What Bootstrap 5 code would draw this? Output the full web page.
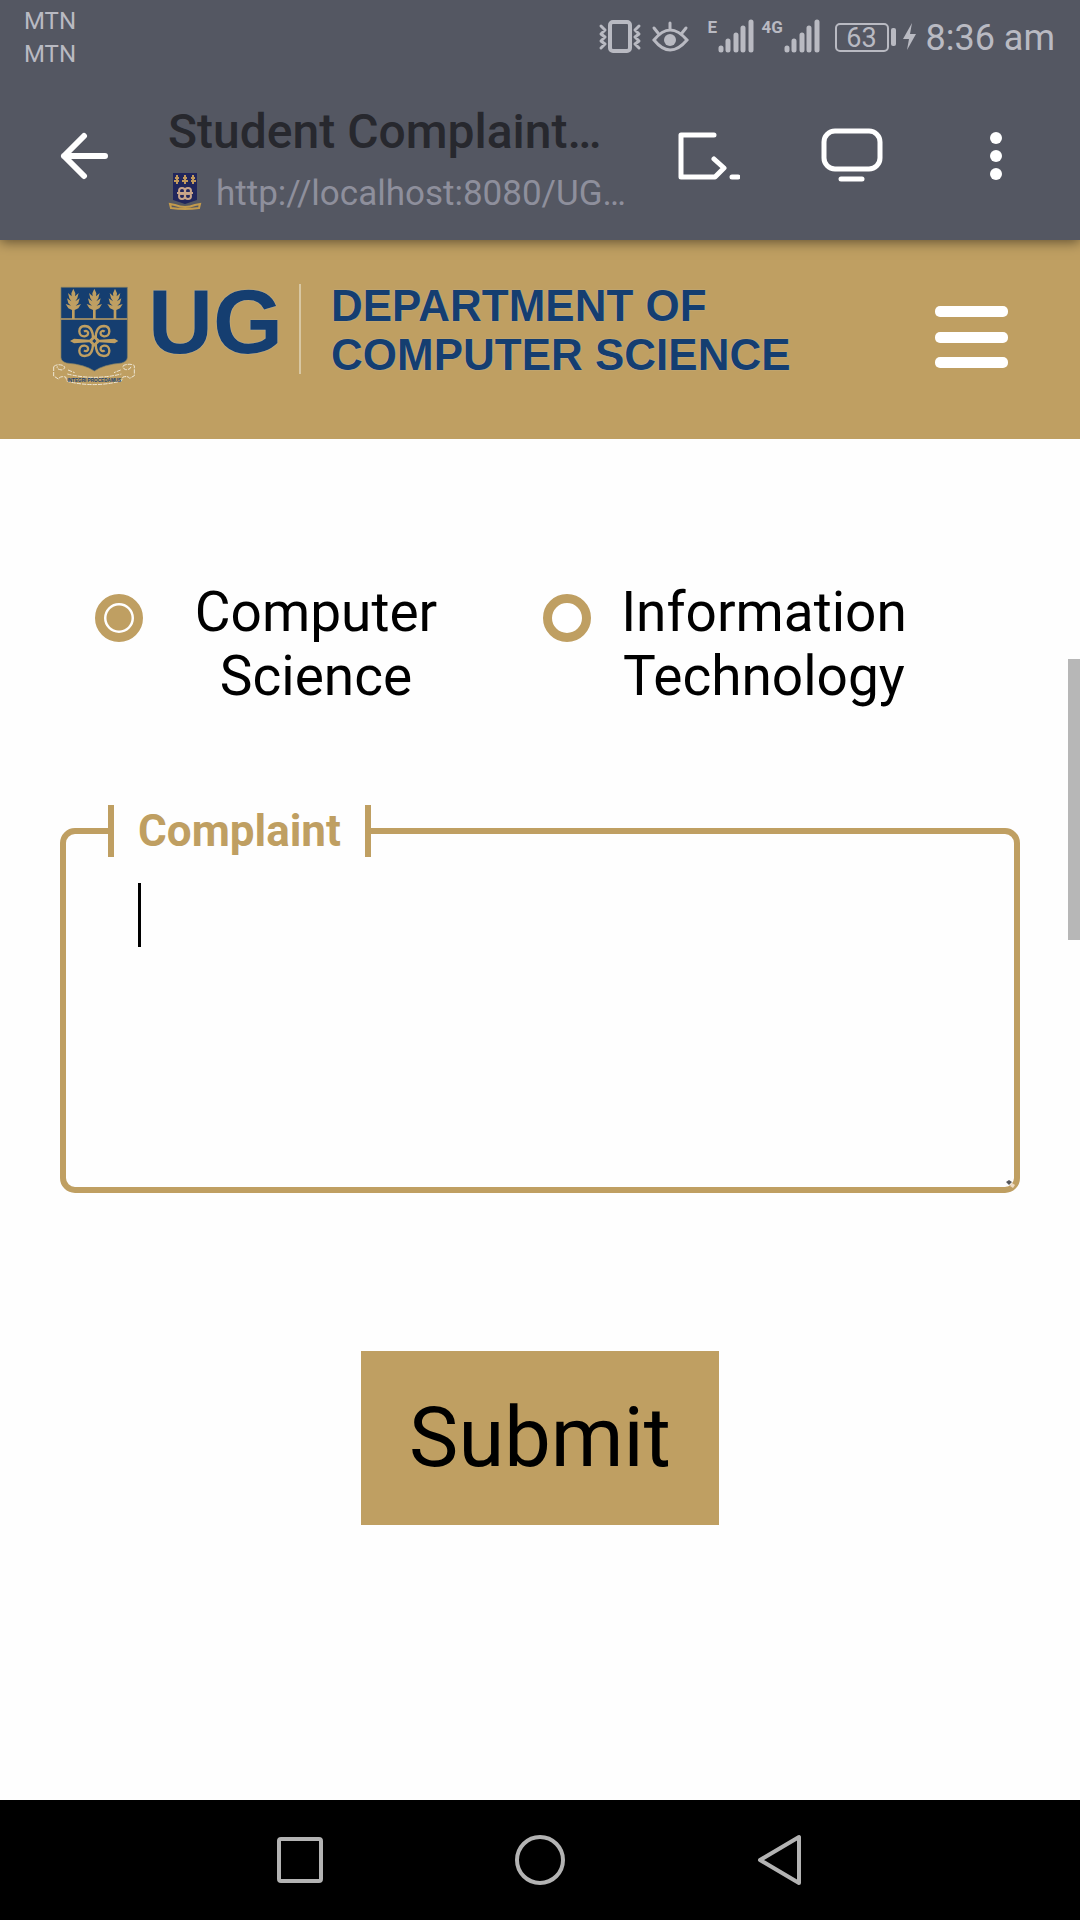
<!DOCTYPE html>
<html lang="en">
<head>
<meta charset="utf-8">
<meta name="viewport" content="width=device-width, initial-scale=1">
<title>Student Complaint</title>
<link href="https://cdn.jsdelivr.net/npm/bootstrap@5.3.0/dist/css/bootstrap.min.css" rel="stylesheet">
<style>
  :root { --gold: #bf9f62; --navy: #153e70; --slate: #545762; --soft: #b9bac2; }
  body { font-family: Roboto, "Noto Sans", sans-serif; color: #000; background: #fefefe; }
  svg { display: block; flex: none; }
  .plain-btn { background: none; border: 0; padding: 0; flex: none; }

  .status-bar { background: var(--slate); color: var(--soft); height: 72px; padding: 5px 25px 0 24px; z-index: 3; }
  .carrier { font-size: 24px; line-height: 33px; }
  .status-icons { padding-top: 11px; }
  .net-type { font: bold 17px/17px Roboto, sans-serif; padding-top: 3px; width: 10px; margin-left: 18px; }
  .net-wide { width: 22px; margin-left: 8px; }
  .battery-level { width: 54px; height: 29px; border: 2px solid var(--soft); border-radius: 5px; font-size: 27px; line-height: 26px; margin: 7px 0 0 15px; }
  .clock { font-size: 36px; line-height: 44px; }

  .app-bar { background: var(--slate); height: 168px; padding: 0 52px 0 60px; box-shadow: 0 2px 12px rgba(0,0,0,.5); z-index: 2; }
  .page-info { width: 462px; margin-left: 58px; padding-top: 32px; }
  .page-name { font-size: 48px; line-height: 56px; font-weight: 500; color: #27282e; }
  .page-url { font-size: 35px; line-height: 44px; color: #8e8f9c; margin-top: 12px; gap: 14px; }
  .tools { margin-left: 46px; }

  .site-header { background: var(--gold); min-height: 199px; padding: 41px 72px 0 50px; }
  .brand { color: var(--navy); font-family: "Liberation Sans", Arial, sans-serif; font-weight: bold; text-decoration: none; }
  .brand svg { margin-top: 4px; }
  .brand-ug { font-size: 90px; line-height: 80px; margin: 1px 0 0 10px; text-shadow: 0 0 1px #cbd0cf; }
  .brand-rule { width: 2px; height: 90px; margin: 3px 30px 0 16px; background: #d8c7a2; }
  .brand-dept { font-size: 44px; line-height: 49px; text-shadow: 0 0 1px #cbd0cf; }
  .menu-btn { margin-top: 24px; }

  .form-area { padding: 141px 60px 100px; }
  .options { padding: 0 32px; }
  .option { padding: 0 51px 0 3px; font-size: 55px; line-height: 64px; }
  .radio-gold { appearance: none; flex: none; width: 48px; height: 48px; margin: 14px 0 0; border: 9px solid var(--gold); border-radius: 50%; background: #fff; }
  .radio-gold:checked { background: radial-gradient(circle, var(--gold) 12px, #fff 13px); }

  .complaint-box { margin-top: 97px; border: 6px solid var(--gold); border-radius: 15px; padding: 0 0 0 42px; }
  .complaint-box legend { float: none; width: auto; margin: 0; padding: 0 24px; border: 0 solid var(--gold); border-width: 0 6px; color: var(--gold); font-size: 44px; font-weight: bold; line-height: 52px; }
  .complaint-text { display: block; width: 100%; height: 330px; padding: 26px 30px; border: 0; outline: 0; resize: none; background: none; font-size: 55px; line-height: 64px; }
  .text-caret { top: 26px; left: 30px; width: 3px; height: 64px; background: #000; }
  .resize-grip { right: -2px; bottom: -2px; width: 12px; height: 10px; }

  .submit-btn { margin-top: 158px; height: 174px; padding: 0 48px; border: 0; background: var(--gold); color: #000; font-size: 83px; line-height: 98px; }
  .scroll-thumb { right: 0; top: 659px; width: 12px; height: 281px; background: #b7b7b7; z-index: 3; }

  .nav-keys { background: #000; height: 120px; gap: 190px; }
</style>
</head>
<body class="d-flex flex-column min-vh-100 position-relative">

<div class="status-bar d-flex justify-content-between position-relative">
  <div class="carrier">MTN<br>MTN</div>
  <div class="status-icons d-flex">
    <svg width="44" height="38" viewBox="0 0 44 38" fill="none" stroke="#b9bac2" stroke-width="3" stroke-linecap="round" stroke-linejoin="round">
      <rect x="12" y="6" width="20" height="29" rx="3" stroke-width="4"/>
      <path d="M3 10l4 4-4 4 4 3-4 4 4 3-4 4M41 10l-4 4 4 4-4 3 4 4-4 3 4 4"/>
    </svg>
    <svg class="ms-2" width="40" height="38" viewBox="0 0 40 38" fill="none" stroke="#b9bac2" stroke-width="3" stroke-linecap="round">
      <path d="M4 24Q20 4 37 24Q20 44 4 24zM20 7v6M4 12l4 5M36 12l-4 5"/>
      <circle cx="20" cy="24" r="6" fill="#b9bac2" stroke="none"/>
    </svg>
    <span class="net-type">E</span>
    <svg width="36" height="38" viewBox="0 0 36 38" stroke="#b9bac2" stroke-width="5" stroke-linecap="round">
      <path d="M3 32v2M10 25v9M18 19v15M25 12v22M33 6v28"/>
    </svg>
    <span class="net-type net-wide">4G</span>
    <svg width="36" height="38" viewBox="0 0 36 38" stroke="#b9bac2" stroke-width="5" stroke-linecap="round">
      <path d="M3 32v2M10 25v9M18 19v15M25 12v22M33 6v28"/>
    </svg>
    <div class="battery-level text-center">63</div>
    <svg width="37" height="38" viewBox="0 0 37 38" fill="#b9bac2">
      <rect x="2" y="12" width="5" height="18" rx="2"/>
      <path d="M23 7L14 23h6l-2 11 9-16h-6z"/>
    </svg>
    <span class="clock">8:36 am</span>
  </div>
</div>

<header class="app-bar d-flex position-relative">
  <button class="plain-btn" type="button" aria-label="Back">
    <svg width="50" height="56" viewBox="0 0 50 56" fill="none" stroke="#fff" stroke-width="6" stroke-linecap="round" stroke-linejoin="round">
      <path d="M24 8L4 28 24 48M4 28h41"/>
    </svg>
  </button>
  <div class="page-info">
    <div class="page-name text-truncate">Student Complaint…</div>
    <div class="page-url d-flex">
      <svg width="34" height="38" viewBox="0 0 34 38">
        <path d="M5 1h24v27l-12 4-12-4z" fill="#21265c"/>
        <path d="M9 3v9M17 3v9M25 3v9M7 6h4M15 6h4M23 6h4M6 9h5M14 9h6M23 9h5" stroke="#c39a5c" stroke-width="2"/>
        <g fill="none" stroke="#c9a58a" stroke-width="2"><circle cx="14" cy="19" r="3"/><circle cx="20" cy="19" r="3"/><circle cx="14" cy="24" r="3"/><circle cx="20" cy="24" r="3"/><path d="M9 21h16"/></g>
        <path d="M2 32l5 1q10 4 20 0l5-1-1 4q-14 2-28 0z" fill="none" stroke="#c39a4c" stroke-width="2"/>
      </svg>
      <span>http://localhost:8080/UG…</span>
    </div>
  </div>
  <div class="tools d-flex flex-fill justify-content-between align-items-center">
    <button class="plain-btn" type="button" aria-label="Console">
      <svg width="64" height="56" viewBox="0 0 64 56" fill="none" stroke="#fff" stroke-width="5" stroke-linecap="round" stroke-linejoin="round">
        <path d="M38 7H5v42h34l9-9-10-9M56 49h6"/>
      </svg>
    </button>
    <button class="plain-btn" type="button" aria-label="Desktop view">
      <svg width="62" height="56" viewBox="0 0 62 56" fill="none" stroke="#fff" stroke-width="5" stroke-linecap="round">
        <rect x="3" y="3" width="56" height="38" rx="11"/><path d="M20 51h21"/>
      </svg>
    </button>
    <button class="plain-btn" type="button" aria-label="More options">
      <svg width="64" height="56" viewBox="0 0 64 56" fill="#fff"><circle cx="32" cy="10" r="6"/><circle cx="32" cy="28" r="6"/><circle cx="32" cy="46" r="6"/></svg>
    </button>
  </div>
</header>

<nav class="site-header d-flex justify-content-between align-items-start">
  <a class="brand d-flex align-items-start" href="#">
    <svg width="88" height="102" viewBox="30 45 264 306">
      <path d="M63 52H262V262Q262 274 245 279Q190 284 163 303Q136 284 80 279Q63 274 63 262Z" fill="#153e70" stroke="#7a7c68" stroke-width="2"/>
      <path d="M63 147H262" stroke="#bf9f62" stroke-width="4"/>
      <g fill="#bf9f62">
        <path id="frond" d="M100 56l6 14-1 9 11-10-4 16-6 9 13-9-4 15-8 7 16-5-8 13-11 5v27h-8v-27l-11-5-8-13 16 5-8-7-4-15 13 9-6-9-4-16 11 10-1-9z"/>
        <use href="#frond" x="63"/><use href="#frond" x="125"/>
        <path d="M90 213l12-7 46 3 15-13 15 13 46-3 11 7-11 7-46-3-15 13-15-13-46 3z"/>
      </g>
      <path d="M163 206l6 7-6 7-6-7z" fill="#153e70"/>
      <g fill="none" stroke="#bf9f62" stroke-width="7">
        <path id="curl" d="M159 206Q159 168 134 168Q118 169 118 184Q119 200 134 199Q146 197 144 187Q139 179 132 185"/>
        <use href="#curl" transform="translate(326 0) scale(-1 1)"/>
        <use href="#curl" transform="translate(0 426) scale(1 -1)"/>
        <use href="#curl" transform="translate(326 426) scale(-1 -1)"/>
      </g>
      <g fill="none" stroke="#eee6d4" stroke-width="3" stroke-dasharray="13 3">
        <path d="M41 290q10-10 30-3 8 8-5 13-18-2-14-11M41 290v28l14 9q6-10 22-6l4 13q82 20 163-1l5-12q16-4 20 4l14-8v-30q-12-8-32-1-6 8 6 13 16 0 16-10M82 312q80 20 162 0M84 300l20 8M242 300l-20 8"/>
      </g>
      <text x="163" y="336" text-anchor="middle" font-family="Liberation Sans, sans-serif" font-weight="bold" font-size="14" fill="#153e70">INTEGRI PROCEDAMUS</text>
    </svg>
    <span class="brand-ug">UG</span>
    <span class="brand-rule"></span>
    <span class="brand-dept">DEPARTMENT OF<br>COMPUTER SCIENCE</span>
  </a>
  <button class="plain-btn menu-btn" type="button" aria-label="Menu">
    <svg width="73" height="64" viewBox="0 0 73 64" fill="#fff"><rect y="1" width="73" height="11" rx="5"/><rect y="27" width="73" height="11" rx="5"/><rect y="52" width="73" height="11" rx="5"/></svg>
  </button>
</nav>

<main class="flex-grow-1">
  <form class="form-area">
    <div class="options row g-0">
      <div class="option col-6 d-flex align-items-start">
        <input class="radio-gold" type="radio" name="dept" id="cs" checked>
        <label class="flex-fill text-center" for="cs">Computer Science</label>
      </div>
      <div class="option col-6 d-flex align-items-start">
        <input class="radio-gold" type="radio" name="dept" id="it">
        <label class="flex-fill text-center" for="it">Information Technology</label>
      </div>
    </div>

    <fieldset class="complaint-box">
      <legend><label for="complaint">Complaint</label></legend>
      <div class="position-relative">
        <textarea class="complaint-text" id="complaint"></textarea>
        <span class="text-caret position-absolute"></span>
        <svg class="resize-grip position-absolute" viewBox="0 0 12 10"><path d="M5 1l3 2-3 3-3-3z" fill="#55565a"/><path d="M8 4l3 2-2 3-3-2z" fill="#efdcc4"/></svg>
      </div>
    </fieldset>

    <div class="text-center">
      <button class="submit-btn" type="submit">Submit</button>
    </div>
  </form>
</main>

<div class="scroll-thumb position-absolute"></div>

<footer class="nav-keys d-flex justify-content-center align-items-center">
  <button class="plain-btn" type="button" aria-label="Recent apps">
    <svg width="50" height="52" viewBox="0 0 50 52" fill="none" stroke="#b3b3b3" stroke-width="4"><rect x="4" y="5" width="42" height="42" rx="2"/></svg>
  </button>
  <button class="plain-btn" type="button" aria-label="Home">
    <svg width="50" height="52" viewBox="0 0 50 52" fill="none" stroke="#b3b3b3" stroke-width="4"><circle cx="25" cy="26" r="23"/></svg>
  </button>
  <button class="plain-btn" type="button" aria-label="Back key">
    <svg width="50" height="52" viewBox="0 0 50 52" fill="none" stroke="#b3b3b3" stroke-width="4" stroke-linejoin="round"><path d="M5 26L44 3v46z"/></svg>
  </button>
</footer>

<script src="https://cdn.jsdelivr.net/npm/bootstrap@5.3.0/dist/js/bootstrap.bundle.min.js"></script>
</body>
</html>
